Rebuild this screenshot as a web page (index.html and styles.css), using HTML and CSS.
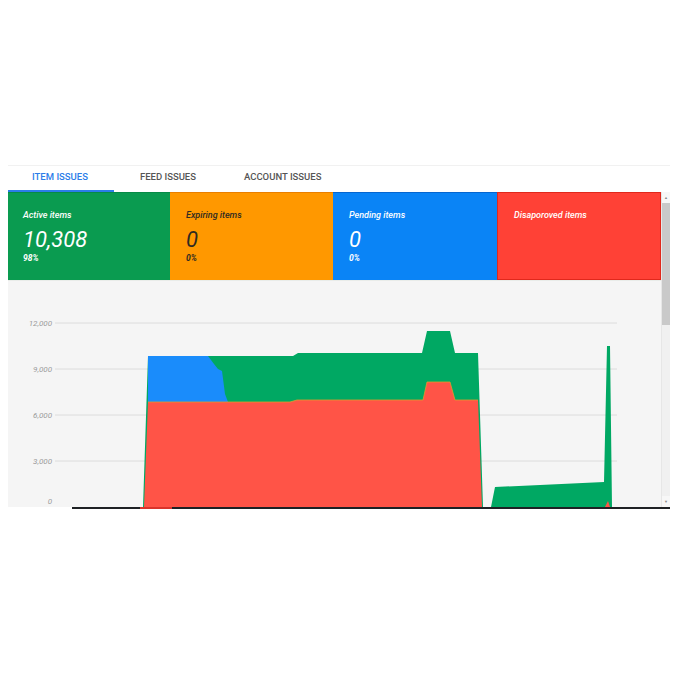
FILE: index.html
```html
<!DOCTYPE html>
<html lang="en">

<head>
    <meta charset="UTF-8">
    <meta name="viewport" content="width=device-width, initial-scale=1.0">
    <title>Item Issues</title>
    <link rel="stylesheet" href="styles.css">
</head>

<body>
    <div class="panel">
        <div class="tabs">
            <div class="tab active">Item issues</div>
            <div class="tab">Feed issues</div>
            <div class="tab">Account issues</div>
        </div>

        <div class="content">
            <div class="main">
                <div class="cards">
                    <div class="card green">
                        <div class="card-label">Active items</div>
                        <div class="card-value">10,308</div>
                        <div class="card-pct">98%</div>
                    </div>
                    <div class="card orange">
                        <div class="card-label">Expiring items</div>
                        <div class="card-value">0</div>
                        <div class="card-pct">0%</div>
                    </div>
                    <div class="card blue">
                        <div class="card-label">Pending items</div>
                        <div class="card-value">0</div>
                        <div class="card-pct">0%</div>
                    </div>
                    <div class="card red">
                        <div class="card-label">Disaporoved items</div>
                    </div>
                </div>

                <div class="chart">
                    <svg width="653" height="227" viewBox="0 0 653 227">
                        <!-- grid -->
                        <g class="grid">
                            <line x1="47" y1="43" x2="609" y2="43" />
                            <line x1="47" y1="89" x2="609" y2="89" />
                            <line x1="47" y1="135" x2="609" y2="135" />
                            <line x1="47" y1="181" x2="609" y2="181" />
                        </g>
                        <g class="axis">
                            <text x="44" y="46">12,000</text>
                            <text x="44" y="92">9,000</text>
                            <text x="44" y="138">6,000</text>
                            <text x="44" y="184">3,000</text>
                            <text x="44" y="224">0</text>
                        </g>

                        <!-- stacked areas -->
                        <polygon class="area-green" points="135,227 140,76 285,76 290,73 414,73 419,51 442,51 447,73 470,73 475,227" />
                        <polygon class="area-blue" points="140,76 200,76 206,84 210,89 214,91 217,114 220,122 140,122" />
                        <polygon class="area-red" points="136,227 140,122 282,122 289,120 415,120 419,102 442,102 447,120 470,120 474,227" />
                        <polyline class="edge" points="140,122 282,122 289,120 415,120 419,102 442,102 447,120 470,120" />
                        <polygon class="area-green" points="483,227 487,207 596,202 599,66 602,66 604,227" />
                        <polygon class="area-red" points="597,227 600,221 602,227" />
                    </svg>
                </div>
            </div>

            <div class="scrollbar">
                <div class="scroll-btn">&#9650;</div>
                <div class="scroll-thumb"></div>
                <div class="scroll-track"></div>
                <div class="scroll-btn">&#9660;</div>
            </div>
        </div>

        <div class="baseline">
            <div class="baseline-mark"></div>
        </div>
    </div>
</body>

</html>
```

FILE: styles.css
```css
/* General Reset */
* {
    margin: 0;
    padding: 0;
    box-sizing: border-box;
    font-family: 'Roboto', 'Liberation Sans', sans-serif;
}

body {
    background: #fff;
    width: 680px;
    height: 680px;
    overflow: hidden;
}

.panel {
    margin: 165px 0 0 8px;
    width: 662px;
}

/* Tabs */
.tabs {
    display: flex;
    height: 27px;
    border-top: 1px solid #f1f1f1;
    background: #fff;
}

.tab {
    padding: 5px 24px 0;
    font-size: 9.5px;
    font-weight: 500;
    text-transform: uppercase;
    color: #555;
    border-bottom: 2px solid transparent;
}

.tab.active {
    padding: 5px 26px 0 24px;
    color: #2b7de9;
    border-bottom-color: #2b7de9;
}

.tab:nth-child(2) {
    padding: 5px 24px 0 26px;
}

/* Cards + chart */
.content {
    display: flex;
}

.main {
    width: 653px;
}

.cards {
    display: grid;
    grid-template-columns: 162px 163px 164px 164px;
    height: 88px;
}

.card {
    padding: 17px 16px 0;
    color: #fff;
    font-style: italic;
}

.card.green {
    background: #0a9b50;
    border-top: 1px solid #078a46;
    padding-left: 15px;
}

.card.orange {
    background: #ff9800;
    border-top: 1px solid #e97f00;
    color: #2e2a22;
}

.card.blue {
    background: #0a84f6;
    border-top: 1px solid #0566d0;
}

.card.red {
    background: #ff4136;
    border: 1px solid #e0281c;
}

.card-label {
    font-size: 9px;
    font-weight: 500;
    line-height: 11px;
}

.card-value {
    font-size: 22px;
    font-weight: 400;
    line-height: 26px;
    margin-top: 6px;
}

.card-pct {
    font-size: 8.5px;
    font-weight: 700;
    line-height: 10px;
}

.chart {
    height: 227px;
    background: #f5f5f5;
    border-top: 1px solid #e9ece9;
}

.chart svg {
    display: block;
    margin-top: -1px;
}

.grid line {
    stroke: #dcdcdc;
    stroke-width: 1;
}

.axis text {
    font-size: 8px;
    font-style: italic;
    fill: #9a9a9a;
    text-anchor: end;
}

.area-green {
    fill: #00a863;
}

.area-blue {
    fill: #1a8cfb;
}

.area-red {
    fill: #ff5447;
}

.edge {
    fill: none;
    stroke: #e39a2c;
    stroke-width: 0.8;
}

/* Scrollbar */
.scrollbar {
    width: 9px;
    display: flex;
    flex-direction: column;
    background: #f0f0f0;
    border-left: 1px solid #e6e6e6;
}

.scroll-btn {
    height: 11px;
    font-size: 4px;
    color: #888;
    text-align: center;
    line-height: 11px;
    background: #f7f7f7;
}

.scroll-thumb {
    height: 122px;
    background: #c9c9c9;
}

.scroll-track {
    flex: 1;
}

/* Bottom axis line */
.baseline {
    margin-left: 64px;
    width: 598px;
    height: 2px;
    background: #1e2124;
}

.baseline-mark {
    margin-left: 68px;
    width: 32px;
    height: 2px;
    background: #d9342b;
}
```
